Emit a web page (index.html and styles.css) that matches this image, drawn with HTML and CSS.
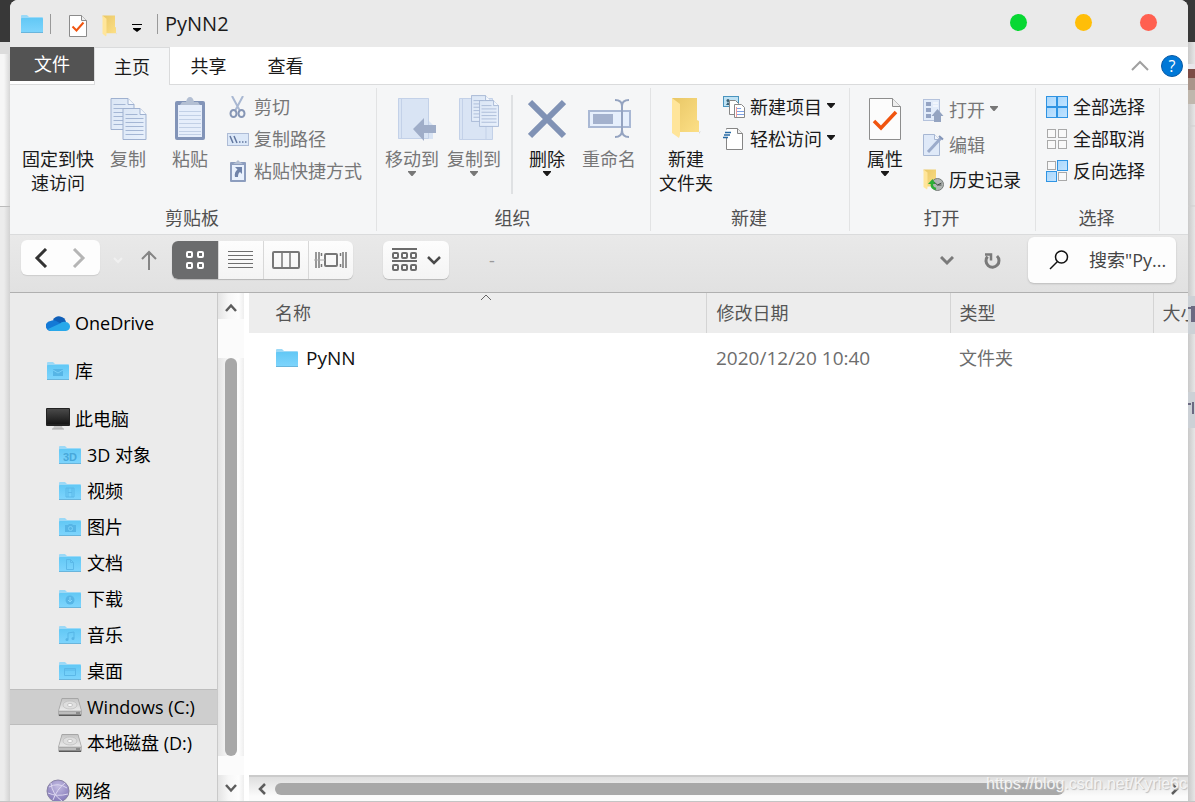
FILE: index.html
```html
<!DOCTYPE html>
<html lang="zh-CN">
<head>
<meta charset="utf-8">
<title>PyNN2</title>
<link rel="stylesheet" href="styles.css">
</head>
<body>
<svg class="defs" aria-hidden="true">
  <defs>
    <linearGradient id="gFolder" x1="0" y1="0" x2="0" y2="1"><stop offset="0" stop-color="#62c8f5"/><stop offset="1" stop-color="#7fd5fd"/></linearGradient>
    <linearGradient id="gGold" x1="0" y1="0" x2="1" y2="1"><stop offset="0" stop-color="#e9c766"/><stop offset="1" stop-color="#fcdf86"/></linearGradient>
    <linearGradient id="gPaper" x1="0" y1="0" x2="1" y2="1"><stop offset="0" stop-color="#dbe6f5"/><stop offset="1" stop-color="#e9f1fc"/></linearGradient>
    <linearGradient id="gDisk" x1="0" y1="0" x2="0" y2="1"><stop offset="0" stop-color="#c4c4c4"/><stop offset="1" stop-color="#ececec"/></linearGradient>
    <linearGradient id="gBlue" x1="0" y1="0" x2="1" y2="1"><stop offset="0" stop-color="#a9d7fc"/><stop offset="1" stop-color="#c3e4ff"/></linearGradient>
    <radialGradient id="gGlobe" cx=".5" cy=".3" r=".7"><stop offset="0" stop-color="#c3bce2"/><stop offset="1" stop-color="#8378b8"/></radialGradient>
    <linearGradient id="gScreen" x1="0" y1="0" x2="0" y2="1"><stop offset="0" stop-color="#4a4a4a"/><stop offset="1" stop-color="#161616"/></linearGradient>
  </defs>
  <symbol id="folder" viewBox="0 0 24 20">
    <path d="M1 3V2q0-1 1-1h5l2 2h13q1 0 1 1v4H1z" fill="#9bd9f7"/>
    <rect x="1" y="4" width="22" height="15" rx="1" fill="url(#gFolder)"/>
    <path d="M1 18.500h22" stroke="#69b5dc" fill="none"/>
  </symbol>
  <symbol id="gold" viewBox="0 0 30 42">
    <path d="M1 1h25v22l2 1v11H8z" fill="url(#gGold)"/>
    <path d="M28 35l2-1-2 3z" fill="#d8d8d8"/>
    <path d="M1 1l8 6v31l-1 3-7-5z" fill="#ffe59a"/>
  </symbol>
  <symbol id="sheet" viewBox="0 0 24 32">
    <path d="M.5.500h17l6 6v25H.5z" fill="url(#gPaper)" stroke="#9fb1d0"/>
    <path d="M17.500.500v6h6" fill="#f4f8fd" stroke="#9fb1d0"/>
    <path d="M3 6.500h12M3 10.500h18M3 14.500h18M3 18.500h18M3 22.500h18M3 26.500h18" stroke="#a4b6d4" fill="none"/>
  </symbol>
  <symbol id="caret" viewBox="0 0 8 5"><path d="M0 0h8v1L4.500 5h-1L0 1z" fill="currentColor"/></symbol>
  <symbol id="disk" viewBox="0 0 24 20">
    <path d="M4 1h16l3.500 13v4q0 1-1 1h-21q-1 0-1-1v-4z" fill="#8a8a8a"/>
    <path d="M4 1.500h16l3.500 12.500H.5z" fill="url(#gDisk)" stroke="#a6a6a6" stroke-width=".7"/>
    <ellipse cx="12" cy="8" rx="7" ry="4" fill="#dedede" stroke="#bbb" stroke-width=".7"/>
    <ellipse cx="12" cy="8" rx="2.500" ry="1.500" fill="#fff" stroke="#aaa" stroke-width=".6"/>
    <path d="M1 14.500h22v2.500H1z" fill="#bdbdbd"/><path d="M1 18.500h22M18 16h4" stroke="#5a5a5a"/>
  </symbol>
</svg>

<div class="desktop">
  <div class="edge edge-left"><div class="edge-dark"></div><div class="edge-line"></div></div>

  <main class="window">
    <header class="titlebar">
      <svg class="tb-folder" width="24" height="20"><use href="#folder"/></svg>
      <span class="tb-sep"></span>
      <button class="tb-btn tb-check" aria-label="属性"><svg width="18" height="22" viewBox="0 0 18 22"><path d="M.5.500h12l5 5v16H.5z" fill="#fff" stroke="#8b8b8b"/><path d="M12.500.500v5h5" fill="#eee" stroke="#8b8b8b"/><path d="M3.500 11.500l4 4 7-8" fill="none" stroke="#f0540f" stroke-width="2"/></svg></button>
      <button class="tb-btn" aria-label="新建文件夹"><svg width="15" height="22" viewBox="0 0 30 42" preserveAspectRatio="none"><use href="#gold"/></svg></button>
      <button class="tb-btn tb-more" aria-label="自定义"><svg width="10" height="8" viewBox="0 0 10 8"><path d="M0 .500h10" stroke="#000"/><path d="M1 4h8v1L5 8 1 5z"/></svg></button>
      <span class="tb-sep tb-sep2"></span>
      <h1 class="title">PyNN2</h1>
      <div class="lights">
        <button class="light green" aria-label="最小化"></button>
        <button class="light yellow" aria-label="最大化"></button>
        <button class="light red" aria-label="关闭"></button>
      </div>
    </header>

    <nav class="tabs">
      <button class="tab tab-file">文件</button>
      <button class="tab tab-active">主页</button>
      <button class="tab">共享</button>
      <button class="tab">查看</button>
      <div class="tab-tools">
        <button class="plain" aria-label="折叠功能区"><svg width="18" height="11" viewBox="0 0 18 11"><path d="M1 10l8-8 8 8" fill="none" stroke="#a0a0a0" stroke-width="2"/></svg></button>
        <button class="help" aria-label="帮助">?</button>
      </div>
    </nav>

    <section class="ribbon">
      <div class="group">
        <div class="group-body group-first">
          <button class="big big-wide"><span class="big-icon"></span><span class="lbl">固定到快<br>速访问</span></button>
          <button class="big" disabled><span class="big-icon"><svg width="37" height="44" viewBox="0 0 37 44"><use href="#sheet" x="0" y="1" width="25" height="32"/><use href="#sheet" x="12" y="11" width="25" height="32"/></svg></span><span class="lbl">复制</span></button>
          <button class="big" disabled><span class="big-icon"><svg width="32" height="44" viewBox="0 0 32 44"><rect x="1" y="4" width="30" height="39" rx="2" fill="#8294b8"/><rect x="4" y="8" width="24" height="32" fill="#e6eefb"/><path d="M5 14.500h22M5 18.500h22M5 22.500h22M5 26.500h22M5 30.500h22M5 34.500h22M5 37.500h22" stroke="#c2d0e6"/><path d="M6 8l2-3h4q1-5 4-5t4 5h4l2 3z" fill="#b3bfd3"/></svg></span><span class="lbl">粘贴</span></button>
          <div class="col">
            <button class="small" disabled><svg width="22" height="22" viewBox="0 0 22 22" fill="none"><path d="M5 0l8 15M16 0L8 15" stroke="#a9b8d2" stroke-width="2"/><ellipse cx="6.500" cy="17.500" rx="3" ry="3.500" stroke="#8797b6" stroke-width="2"/><ellipse cx="14.500" cy="17.500" rx="3" ry="3.500" stroke="#8797b6" stroke-width="2"/></svg>剪切</button>
            <button class="small" disabled><svg width="22" height="22" viewBox="0 0 22 22" fill="none"><rect x=".5" y="5.500" width="21" height="12" fill="#dce8f8" stroke="#aebcd6"/><path d="M3 8l3 7M7 8l3 7M12 14h1.500M15 14h1.500M18 14h1.500" stroke="#62779f" stroke-width="1.500"/></svg>复制路径</button>
            <button class="small" disabled><svg width="22" height="22" viewBox="0 0 22 22"><rect x="3" y="2" width="16" height="20" rx="1" fill="#8c9dbe"/><rect x="5" y="5" width="12" height="15" fill="#e9f1fd"/><path d="M6 4l3-2 2-2 2 2 3 2z" fill="#b3bfd3"/><path d="M8 7h7v7l-2-2q-2 1-2 5H8q-1-5 2.500-7.500z" fill="#6f83aa"/></svg>粘贴快捷方式</button>
          </div>
        </div>
        <div class="group-name">剪贴板</div>
      </div>

      <div class="group group-tight">
        <div class="group-body">
          <button class="big" disabled><span class="big-icon icon-right"><svg width="40" height="44" viewBox="0 0 40 44"><path d="M1 1h31v23l4 4v14H1z" fill="#d9e4f4"/><path d="M1.500 1.500h30v40h-30zM4.500 2v40" fill="none" stroke="#c3d1e8"/><path d="M16 32l11-11v7h12v8H27v8z" fill="#9fadc8"/></svg></span><span class="lbl">移动到</span><svg class="caret" width="8" height="5"><use href="#caret"/></svg></button>
          <button class="big" disabled><span class="big-icon icon-up icon-right"><svg width="40" height="47" viewBox="0 0 40 47"><path d="M.5 4.500h33v41H.5z" fill="#d9e4f4" stroke="#c3d1e8"/><path d="M3.500 5v40M27 5v40" stroke="#c3d1e8"/><use href="#sheet" x="12" y="1" width="20" height="27"/><use href="#sheet" x="20" y="6" width="20" height="27"/></svg></span><span class="lbl">复制到</span><svg class="caret" width="8" height="5"><use href="#caret"/></svg></button>
          <span class="rule"></span>
          <button class="big"><span class="big-icon"><svg width="38" height="44" viewBox="0 0 38 44"><path d="M2 5l34 34M36 5L2 39" stroke="#8092b5" stroke-width="6"/></svg></span><span class="lbl">删除</span><svg class="caret" width="8" height="5"><use href="#caret"/></svg></button>
          <button class="big" disabled><span class="big-icon"><svg width="44" height="44" viewBox="0 0 44 44" fill="none"><rect x="2" y="14" width="41" height="16" fill="#e6effc" stroke="#a9b8d4" stroke-width="2"/><rect x="6" y="17" width="20" height="10" fill="#a3b1cd"/><path d="M28 3q7 0 7 6v24q0 7-7 7M42 3q-7 0-7 6v24q0 7 7 7" stroke="#94a3c0" stroke-width="2"/></svg></span><span class="lbl">重命名</span></button>
        </div>
        <div class="group-name">组织</div>
      </div>

      <div class="group">
        <div class="group-body">
          <button class="big"><span class="big-icon"><svg width="30" height="42"><use href="#gold"/></svg></span><span class="lbl">新建<br>文件夹</span></button>
          <div class="col">
            <button class="small"><svg width="22" height="22" viewBox="0 0 22 22"><rect x=".5" y=".500" width="15" height="10" fill="#bfe2f4" stroke="#4a94be"/><path d="M3 9l2-3 2 3z" fill="#386074"/><circle cx="5" cy="4.500" r="1.500" fill="#386074"/><path d="M6.500 4.500h6l3 3v11h-9z" fill="#fff" stroke="#888"/><path d="M11.500 8.500h7l3 3v10h-10z" fill="#fff" stroke="#888"/><path d="M13 12.500h5M13 15.500h8M13 18.500h8" stroke="#7da0e4"/><path d="M13.500 11v10" stroke="#f29a9a"/></svg>新建项目<svg class="caret" width="8" height="5"><use href="#caret"/></svg></button>
            <button class="small"><svg width="22" height="22" viewBox="0 0 22 22"><path d="M3.500 1.500V.500h11l5 5v16h-16V10" fill="#fff" stroke="#858585"/><path d="M14.500.500v5h5" fill="#eee" stroke="#858585"/><path d="M2 4.500h6M1 7h6M0 9.500h5" stroke="#286ba5" stroke-width="1.500"/></svg>轻松访问<svg class="caret" width="8" height="5"><use href="#caret"/></svg></button>
          </div>
        </div>
        <div class="group-name">新建</div>
      </div>

      <div class="group">
        <div class="group-body">
          <button class="big"><span class="big-icon"><svg width="34" height="44" viewBox="0 0 34 44"><path d="M1.500 1.500h23l8 8v33h-31z" fill="#fcfcfc" stroke="#8d8d8d"/><path d="M24.500 1.500v8h8" fill="#eee" stroke="#8d8d8d"/><path d="M6 24l7 7 15-16" fill="none" stroke="#f0540f" stroke-width="3.500"/></svg></span><span class="lbl">属性</span><svg class="caret" width="8" height="5"><use href="#caret"/></svg></button>
          <div class="col col-loose">
            <button class="small" disabled><svg width="22" height="24" viewBox="0 0 22 24"><rect x="1.500" y="1.500" width="16" height="21" fill="#e2ecfa" stroke="#b4c2dc"/><g fill="#94a4c4"><rect x="4" y="4" width="5" height="4"/><rect x="4" y="10" width="5" height="4"/><rect x="4" y="16" width="5" height="4"/></g><path d="M11 5h5M11 8h5" stroke="#fff"/><path d="M15.500 11l6 7H19v6h-7v-6H9.500z" fill="#94a4c1"/></svg>打开<svg class="caret" width="8" height="5"><use href="#caret"/></svg></button>
            <button class="small" disabled><svg width="22" height="22" viewBox="0 0 22 22"><path d="M1.500.500h11l5 5v16h-16z" fill="#dfe9f8" stroke="#a7b7d3"/><path d="M12.500.500v5h5" fill="#f2f6fc" stroke="#a7b7d3"/><path d="M6 18l13-14" stroke="#9babcb" stroke-width="3"/><path d="M17 2l4 3.500" stroke="#8496b9" stroke-width="2"/></svg>编辑</button>
            <button class="small"><svg width="22" height="22" viewBox="0 0 22 22"><use href="#gold" x="1" y="0" width="15" height="21"/><circle cx="15.500" cy="15.500" r="6" fill="#b1b6b4" stroke="#757b78"/><path d="M12 13l3.500 3 4-2M15.500 16h4" stroke="#454b48" fill="none"/><path d="M14 20q-5-1-4-6" fill="none" stroke="#2cae36" stroke-width="2.500"/><path d="M6 15l4.500-5 3 5z" fill="#2cae36"/></svg>历史记录</button>
          </div>
        </div>
        <div class="group-name">打开</div>
      </div>

      <div class="group">
        <div class="group-body">
          <div class="col">
            <button class="small"><svg width="22" height="22" viewBox="0 0 22 22" fill="url(#gBlue)" stroke="#2f94e3"><rect x=".5" y=".500" width="10" height="10"/><rect x="11.500" y=".500" width="10" height="10"/><rect x=".5" y="11.500" width="10" height="10"/><rect x="11.500" y="11.500" width="10" height="10"/></svg>全部选择</button>
            <button class="small"><svg width="22" height="22" viewBox="0 0 22 22" fill="#f9f9f9" stroke="#a9a9a9"><rect x="1.500" y="1.500" width="8" height="8"/><rect x="12.500" y="1.500" width="8" height="8"/><rect x="1.500" y="12.500" width="8" height="8"/><rect x="12.500" y="12.500" width="8" height="8"/></svg>全部取消</button>
            <button class="small"><svg width="22" height="22" viewBox="0 0 22 22" fill="#f9f9f9" stroke="#a9a9a9"><rect x="1.500" y="1.500" width="8" height="8"/><rect x="12.500" y="12.500" width="8" height="8"/><rect x="11.500" y=".500" width="10" height="10" fill="url(#gBlue)" stroke="#2f94e3"/><rect x=".5" y="11.500" width="10" height="10" fill="url(#gBlue)" stroke="#2f94e3"/></svg>反向选择</button>
          </div>
        </div>
        <div class="group-name">选择</div>
      </div>
    </section>

    <section class="toolbar">
      <div class="nav-pair">
        <button class="plain" aria-label="后退"><svg width="14" height="20" viewBox="0 0 14 20"><path d="M12 1L3 10l9 9" fill="none" stroke="#333" stroke-width="3"/></svg></button>
        <button class="plain" aria-label="前进"><svg width="14" height="20" viewBox="0 0 14 20"><path d="M2 1l9 9-9 9" fill="none" stroke="#b5b5b5" stroke-width="3"/></svg></button>
      </div>
      <button class="plain recent" aria-label="最近位置"><svg width="10" height="7" viewBox="0 0 10 7"><path d="M1 1l4 4 4-4" fill="none" stroke="#f0f0f0" stroke-width="2"/></svg></button>
      <button class="plain up" aria-label="向上"><svg width="16" height="20" viewBox="0 0 16 20"><path d="M8 20V2M1 9l7-7 7 7" fill="none" stroke="#858585" stroke-width="2"/></svg></button>
      <div class="views">
        <button class="view view-on" aria-label="图标视图"><svg width="20" height="20" viewBox="0 0 20 20" fill="none" stroke="#fff" stroke-width="2"><rect x="2" y="2" width="5" height="5" rx="1"/><rect x="13" y="2" width="5" height="5" rx="1"/><rect x="2" y="13" width="5" height="5" rx="1"/><rect x="13" y="13" width="5" height="5" rx="1"/></svg></button>
        <button class="view" aria-label="列表视图"><svg width="26" height="20" viewBox="0 0 26 20"><path d="M0 1.500h25M0 5.500h25M0 9.500h25M0 13.500h25M0 17.500h25" stroke="#6e6e6e"/></svg></button>
        <button class="view" aria-label="分栏视图"><svg width="28" height="20" viewBox="0 0 28 20" fill="none" stroke="#777" stroke-width="2"><rect x="1" y="2" width="26" height="16" rx="1"/><path d="M10 2v16M18 2v16" stroke-width="1.500"/></svg></button>
        <button class="view" aria-label="画廊视图"><svg width="34" height="20" viewBox="0 0 34 20" fill="none" stroke="#777" stroke-width="1.500"><rect x="11" y="4" width="12" height="12" rx="1" stroke-width="2"/><path d="M2 2v16M5 2v16M7.500 3v3M7.500 14v3M26.500 3v3M26.500 14v3M29 2v16M32 2v16"/><path d="M0 10h11" stroke="#aaa" stroke-width="1"/></svg></button>
      </div>
      <button class="arrange" aria-label="分组">
        <svg width="28" height="24" viewBox="0 0 28 24" fill="none" stroke="#6b6b6b" stroke-width="2"><path d="M1 1h25M1 13h25"/><rect x="2" y="5" width="5" height="5" rx="1"/><rect x="11" y="5" width="5" height="5" rx="1"/><rect x="20" y="5" width="5" height="5" rx="1"/><rect x="2" y="17" width="5" height="5" rx="1"/><rect x="11" y="17" width="5" height="5" rx="1"/><rect x="20" y="17" width="5" height="5" rx="1"/></svg>
        <svg width="14" height="9" viewBox="0 0 14 9"><path d="M1 1l6 6 6-6" fill="none" stroke="#4a4a4a" stroke-width="2.500"/></svg>
      </button>
      <span class="dash">-</span>
      <div class="path-tools">
        <button class="plain" aria-label="展开"><svg width="14" height="10" viewBox="0 0 14 10"><path d="M1 1l6 6 6-6" fill="none" stroke="#7a7a7a" stroke-width="3"/></svg></button>
        <button class="plain" aria-label="刷新"><svg width="18" height="18" viewBox="0 0 18 18" fill="none" stroke="#7a7a7a" stroke-width="3"><path d="M3.500 4.500A6.500 6.500 0 1 0 13 4"/><path d="M1 2.500h6v6" stroke-width="2.500"/></svg></button>
      </div>
      <label class="search"><svg width="20" height="20" viewBox="0 0 20 20" fill="none" stroke="#111" stroke-width="1.500"><circle cx="12.500" cy="7" r="6"/><path d="M8.500 11.500L1 19"/></svg><input type="text" aria-label="搜索" placeholder="搜索&quot;Py..."></label>
    </section>

    <section class="body">
      <nav class="side">
        <a class="item top" href="#"><svg width="24" height="20" viewBox="0 0 24 20"><path d="M7 7a7 7 0 0 1 13 2l-8 5z" fill="#0f5fb8"/><path d="M5 18A5 5 0 0 1 4.500 8Q8 6 12 9l5 3-8 6z" fill="#1379d6"/><path d="M14 10.500Q16 8 20 9a4.500 4.500 0 0 1-1 9H5q-2 0-3-2z" fill="#28a8ea"/></svg>OneDrive</a>
        <a class="item top" href="#"><svg width="24" height="20"><use href="#folder"/><path d="M7 8h10v7H7z" fill="#56b5e6"/><path d="M7 9l5 3 5-3" fill="none" stroke="#79d0f8"/></svg>库</a>
        <a class="item top" href="#"><svg width="24" height="22" viewBox="0 0 24 22"><rect width="24" height="18" rx="1" fill="#222"/><rect x="1" y="1" width="22" height="15" fill="url(#gScreen)"/><path d="M8 18h8l1 3H7z" fill="#c5c5c5"/><path d="M6 21h12" stroke="#aaa"/></svg>此电脑</a>
        <a class="item" href="#"><svg width="24" height="20"><use href="#folder"/><text x="12" y="16" class="icon-text">3D</text></svg>3D 对象</a>
        <a class="item" href="#"><svg width="24" height="20"><use href="#folder"/><path d="M8 7h8v9H8zM10 7v9M14 7v9M10 11.500h4" fill="none" stroke="#5bb8e8"/></svg>视频</a>
        <a class="item" href="#"><svg width="24" height="20"><use href="#folder"/><path d="M7 8h3l1-1h3l1 1h3v7H7z" fill="#56b5e6"/><circle cx="12.500" cy="11.500" r="2" fill="none" stroke="#79d0f8"/></svg>图片</a>
        <a class="item" href="#"><svg width="24" height="20"><use href="#folder"/><path d="M8.500 6.500h4l3 3v7h-7zM12.500 6.500v3h3" fill="none" stroke="#5bb8e8"/></svg>文档</a>
        <a class="item" href="#"><svg width="24" height="20"><use href="#folder"/><circle cx="12" cy="11" r="4.500" fill="#56b5e6"/><path d="M12 8v5M10 11l2 2 2-2" fill="none" stroke="#83d6fc"/></svg>下载</a>
        <a class="item" href="#"><svg width="24" height="20"><use href="#folder"/><path d="M10 14V8l6-1v6" fill="none" stroke="#56b5e6"/><circle cx="9" cy="14.500" r="1.500" fill="#56b5e6"/><circle cx="15" cy="13.500" r="1.500" fill="#56b5e6"/></svg>音乐</a>
        <a class="item" href="#"><svg width="24" height="20"><use href="#folder"/><path d="M6.500 7.500h11v7h-11zM7 9h10" fill="none" stroke="#5bb8e8"/></svg>桌面</a>
        <a class="item selected" href="#"><svg width="24" height="20"><use href="#disk"/></svg>Windows (C:)</a>
        <a class="item" href="#"><svg width="24" height="20"><use href="#disk"/></svg>本地磁盘 (D:)</a>
        <a class="item top" href="#"><svg width="24" height="24" viewBox="0 0 24 24"><circle cx="12" cy="12" r="11" fill="url(#gGlobe)" stroke="#8a84a5"/><path d="M3 8q9-5 18 1M5 4q1 11 11 18M19 4q-8 6-12 17M2 14q9 4 20 1" fill="none" stroke="#ddd8f0"/></svg>网络</a>
      </nav>

      <div class="vscroll">
        <button class="plain v-arrow" aria-label="向上滚动"><svg width="14" height="10" viewBox="0 0 14 10"><path d="M2 8l5-5.500L12 8" fill="none" stroke="#5d5d5d" stroke-width="2.500"/></svg></button>
        <div class="v-space"></div>
        <div class="v-thumb"></div>
        <div class="v-rest"></div>
        <button class="plain v-arrow v-down" aria-label="向下滚动"><svg width="14" height="10" viewBox="0 0 14 10"><path d="M2 2l5 5.500L12 2" fill="none" stroke="#5d5d5d" stroke-width="2.500"/></svg></button>
      </div>

      <div class="content">
        <div class="list">
          <table class="files">
            <thead><tr>
              <th class="c-name">名称<svg class="sort" width="12" height="7" viewBox="0 0 12 7"><path d="M1 6l5-5 5 5" fill="none" stroke="#666"/></svg></th>
              <th class="c-date">修改日期</th><th class="c-type">类型</th><th class="c-size">大小</th>
            </tr></thead>
            <tbody><tr>
              <td class="c-name"><span class="file"><svg width="24" height="20"><use href="#folder"/></svg>PyNN</span></td>
              <td class="date">2020/12/20 10:40</td><td>文件夹</td><td></td>
            </tr></tbody>
          </table>
        </div>
        <div class="hscroll">
          <button class="plain h-arrow" aria-label="向左滚动"><svg width="10" height="14" viewBox="0 0 10 14"><path d="M8 2L3 7l5 5" fill="none" stroke="#5d5d5d" stroke-width="2.500"/></svg></button>
          <div class="h-thumb"></div>
          <div class="h-rest"></div>
          <button class="plain h-arrow" aria-label="向右滚动"><svg width="10" height="14" viewBox="0 0 10 14"><path d="M2 2l5 5-5 5" fill="none" stroke="#5d5d5d" stroke-width="2.500"/></svg></button>
          <span class="watermark">https://blog.csdn.net/Kyrie6c</span>
        </div>
      </div>
    </section>
  </main>

  <div class="edge edge-right">
    <div class="edge-dark"></div>
    <svg width="7" height="760" viewBox="0 0 7 760"><path d="M0 22h7v5H0z" fill="#e9e6ea"/><path d="M0 27h7v9H0z" fill="#7d4c45"/><path d="M0 36h7v12H0z" fill="#a9958a"/><path d="M0 48h7v14H0z" fill="#bfb7ad"/><path d="M0 84h7M0 164h7" stroke="#cfcfcf"/><path d="M0 254h7v38H0zM0 350h7v36H0z" fill="#ccd1d6"/><path d="M0 266h3M4 264v16M6 264v16M0 362h3M5 360v12" stroke="#6b6981" stroke-width="2"/></svg>
  </div>
</div>
</body>
</html>
```

FILE: styles.css
```css
* { box-sizing: border-box; }

body {
  margin: 0;
  overflow: hidden;
  background: #ececec;
  color: #1a1a1a;
  font: 18px/24px "Open Sans", "Noto Sans CJK SC", sans-serif;
}

button, input {
  font: inherit;
  color: inherit;
  border: 0;
  padding: 0;
  margin: 0;
  background: none;
}

svg { display: block; flex: none; }
.defs { position: absolute; width: 0; height: 0; }

.desktop {
  display: flex;
  height: 100vh;
  padding-bottom: 1px;
  background: linear-gradient(#383838 42px, #c4c4c4 42px);
}

/* visible slivers of the page behind the window */
.edge { flex: none; overflow: hidden; }
.edge-left { width: 10px; background: linear-gradient(to right, #ececec 40%, #d2d2d2); }
.edge-right { width: 7px; background: linear-gradient(to right, #c9c9c9, #e6e6e6); }
.edge-dark { height: 42px; background: #383838; }
.edge-line { height: 165px; border-top: 12px solid #dcdcdc; border-bottom: 1px solid #bbb; background: linear-gradient(to right, #f6f6f6 40%, #d6d6d6); }

.window {
  flex: 1;
  min-width: 0;
  display: flex;
  flex-direction: column;
  overflow: hidden;
  background: #fff;
  border-radius: 8px 8px 0 0;
}

.plain { display: flex; align-items: center; justify-content: center; }

/* title bar */
.titlebar {
  flex: none;
  display: flex;
  align-items: center;
  height: 47px;
  padding: 0 31px 0 10px;
  background: #eaeaea;
}
.tb-sep { width: 1px; height: 20px; margin-left: 6px; background: #999; }
.tb-btn { margin-right: 15px; padding-top: 4px; }
.tb-check { margin-left: 18px; }
.tb-more { padding-top: 8px; }
.tb-sep2 { margin: 0 7px 0 0; }
.title { margin: 0; font-size: 20px; font-weight: 400; line-height: 24px; }
.lights { display: flex; gap: 48px; margin-left: auto; padding-bottom: 2px; }
.light { width: 17px; height: 17px; border-radius: 50%; }
.green { background: #08d833; }
.yellow { background: #ffbe08; }
.red { background: #ff6050; }

/* ribbon tabs */
.tabs {
  flex: none;
  display: flex;
  height: 38px;
  background: #fff;
  border-bottom: 1px solid #dadbdc;
}
.tab { width: 77px; }
.tab-file { width: 84px; height: 34px; background: #535353; color: #fff; }
.tab-active { width: 76px; height: 38px; border: 1px solid #dadbdc; border-bottom: 0; background: #f5f6f7; }
.tab-tools { display: flex; align-items: center; gap: 12px; margin-left: auto; padding-right: 5px; }
.help { width: 22px; height: 22px; border-radius: 50%; border: 1px solid #0a5aa5; background: #0078d7; color: #fff; font-size: 16px; line-height: 20px; }

/* ribbon */
.ribbon {
  flex: none;
  display: flex;
  height: 150px;
  padding: 3px 0;
  background: #f5f6f7;
  border-bottom: 1px solid #dadbdc;
}
.group {
  display: flex;
  flex-direction: column;
  padding: 0 14px 0 4px;
  border-right: 1px solid #e2e3e4;
}
.group-tight { padding-right: 10px; }
.group-body { flex: 1; display: flex; align-items: flex-start; }
.group-first { padding-left: 5px; }
.group-name { margin: 0 -12px 0 -4px; text-align: center; line-height: 26px; color: #505050; }
.group-tight .group-name { margin-right: -8px; }
.big {
  display: flex;
  flex-direction: column;
  align-items: center;
  width: 62px;
  padding-top: 9px;
}
.big-wide { width: 78px; }
.big-icon { display: flex; justify-content: center; height: 50px; }
.icon-up { height: 53px; margin-top: -3px; }
.icon-right { padding-left: 9px; }
.big .lbl { white-space: nowrap; }
.ribbon button:disabled { color: #777; }
.col { display: flex; flex-direction: column; gap: 8px; margin-left: 6px; padding-top: 7px; }
.col-loose { gap: 11px; padding-top: 10px; }
.small { display: flex; align-items: center; gap: 5px; height: 24px; white-space: nowrap; }
.small .caret { margin-bottom: 3px; }
.rule { width: 2px; height: 99px; margin: 7px 3px 0 6px; background: #dfe1e3; }

/* navigation toolbar */
.toolbar {
  flex: none;
  display: flex;
  align-items: center;
  height: 58px;
  padding: 2px 12px 9px 11px;
  background: linear-gradient(#e9e9e9, #e1e1e1);
  border-bottom: 1px solid #b0b0b0;
}
.nav-pair {
  display: flex;
  align-items: center;
  align-self: flex-start;
  gap: 24px;
  height: 35px;
  margin-top: 3px;
  padding: 0 14px 0 13px;
  background: #fdfdfd;
  border-radius: 6px;
  box-shadow: 0 1px 1px #ccc;
}
.recent { margin: 0 18px 0 13px; }
.views, .arrange {
  display: flex;
  height: 38px;
  border-radius: 6px;
  background: linear-gradient(#fdfdfd, #f4f4f4);
  box-shadow: 0 1px 1px #b5b5b5;
}
.views { margin-left: 15px; overflow: hidden; }
.view { display: flex; align-items: center; justify-content: center; width: 45px; border-left: 1px solid #d8d8d8; }
.view-on { width: 46px; background: #6b6c6d; border-left: 0; }
.arrange { align-items: center; gap: 8px; margin-left: 30px; padding: 0 8px; }
.dash { margin-left: 40px; color: #999; }
.path-tools { display: flex; align-items: center; gap: 30px; margin-left: auto; margin-right: 26px; padding-top: 2px; }
.search {
  display: flex;
  align-items: center;
  gap: 20px;
  width: 148px;
  height: 46px;
  padding: 0 5px 0 21px;
  background: #fdfdfd;
  border-radius: 6px;
  box-shadow: 0 1px 2px #bbb;
}
.search input { flex: 1; min-width: 0; outline: 0; }
.search input::placeholder { color: #444; opacity: 1; }

/* body */
.body { flex: 1; min-height: 0; display: flex; }

.side {
  flex: none;
  width: 208px;
  overflow: hidden;
  background: #ebebeb;
  border-right: 1px solid #c9c9c9;
}
.item {
  display: flex;
  align-items: center;
  gap: 5px;
  height: 36px;
  padding-left: 48px;
  color: #000;
  text-decoration: none;
  white-space: nowrap;
}
.top { margin-top: 12px; padding-left: 36px; }
.selected { background: #cecece; border: solid #bdbdbd; border-width: 1px 0; }
.icon-text { font: 700 11px "Liberation Sans", sans-serif; fill: #48a8da; text-anchor: middle; }

.vscroll {
  flex: none;
  display: flex;
  flex-direction: column;
  align-items: center;
  width: 26px;
  margin-right: 5px;
  background: linear-gradient(to right, #e4e4e4, #f7f7f7 40%, #fdfdfd 80%, #eee);
}
.v-arrow { width: 26px; height: 26px; padding-top: 4px; }
.v-down { padding: 0; }
.v-space { flex: 39; width: 26px; background: #fbfbfb; }
.v-thumb { flex: 398; width: 12px; border-radius: 6px; background: #a8a8a8; }
.v-rest { flex: 19; width: 26px; background: #fbfbfb; }

.content { flex: 1; min-width: 0; display: flex; flex-direction: column; }
.list { flex: 1; overflow: hidden; }
.files { width: 100%; table-layout: fixed; border-collapse: collapse; color: #6d6d6d; }
.files th {
  position: relative;
  height: 40px;
  padding: 0 0 0 9px;
  background: #ededed;
  border-right: 1px solid #d4d4d4;
  color: #555;
  font-weight: 400;
  text-align: left;
  white-space: nowrap;
}
.files th:last-child { border-right: 0; overflow: hidden; }
.files td { height: 50px; padding: 0 0 0 9px; }
.files .c-name { width: 49%; padding-left: 26px; }
.c-date { width: 26%; }
.files .c-type { width: 203px; }
.files .c-size { width: 35px; }
.files .date { font-size: 19px; }
.sort { position: absolute; top: 1px; right: 214px; }
.file { display: flex; align-items: center; gap: 7px; color: #111; font-size: 19px; }

.hscroll {
  position: relative;
  flex: none;
  display: flex;
  align-items: center;
  height: 26px;
  border-top: 2px solid #cbcbcb;
  background: linear-gradient(#dedede, #fbfbfb 80%);
}
.h-arrow { width: 26px; height: 24px; }
.h-thumb { flex: 789; height: 12px; border-radius: 6px; background: #a8a8a8; }
.h-rest { flex: 98; height: 24px; }
.watermark {
  position: absolute;
  right: 1px;
  bottom: 8px;
  color: #f4f4f4;
  font: 16px/18px "Liberation Sans", sans-serif;
  text-shadow: 1px 1px 1px #bbb;
}
```
